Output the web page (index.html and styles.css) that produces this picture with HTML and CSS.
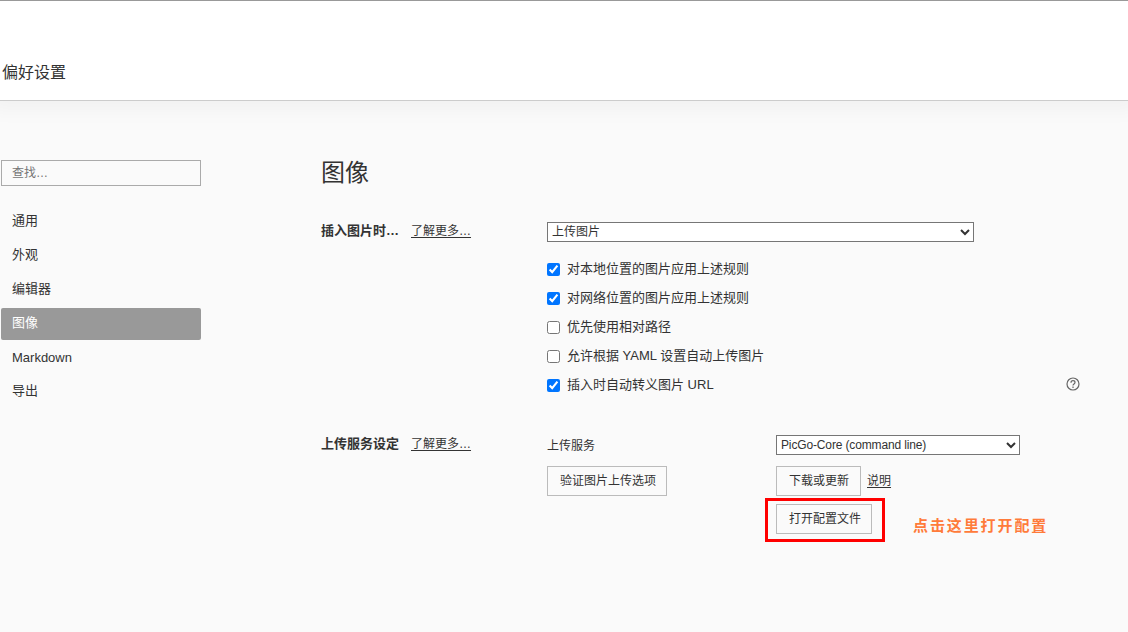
FILE: index.html
```html
<!DOCTYPE html>
<html lang="zh-CN">
<head>
<meta charset="utf-8">
<title>偏好设置</title>
<link rel="stylesheet" href="styles.css">
</head>
<body>
<header class="header"><h1 class="header-title">偏好设置</h1></header>
<div class="layout">
  <aside class="sidebar">
    <input class="search" type="text" placeholder="查找…">
    <nav class="nav">
      <a class="nav-item">通用</a>
      <a class="nav-item">外观</a>
      <a class="nav-item">编辑器</a>
      <a class="nav-item active">图像</a>
      <a class="nav-item latin">Markdown</a>
      <a class="nav-item">导出</a>
    </nav>
  </aside>
  <main class="content">
    <h2 class="title">图像</h2>
    <section class="group">
      <div class="group-head"><strong class="group-name">插入图片时…</strong><a class="link">了解更多…</a></div>
      <div class="group-body">
        <select class="select select-wide"><option>上传图片</option></select>
        <div class="checks">
          <label class="check"><input type="checkbox" checked><span>对本地位置的图片应用上述规则</span></label>
          <label class="check"><input type="checkbox" checked><span>对网络位置的图片应用上述规则</span></label>
          <label class="check"><input type="checkbox"><span>优先使用相对路径</span></label>
          <label class="check"><input type="checkbox"><span>允许根据 YAML 设置自动上传图片</span></label>
          <label class="check"><input type="checkbox" checked><span>插入时自动转义图片 URL</span>
            <svg class="help" viewBox="0 0 14 14" width="14" height="14" fill="none" stroke="#666" stroke-width="1.2"><circle cx="7" cy="7" r="6"/><path d="M5 5.7C5 4.4 5.8 3.7 7 3.7s2 .7 2 1.8c0 1.5-2 1.6-2 3.1"/><path d="M7 9.6v1.3"/></svg>
          </label>
        </div>
      </div>
    </section>
    <section class="group group-upload">
      <div class="group-head"><strong class="group-name">上传服务设定</strong><a class="link">了解更多…</a></div>
      <div class="group-body upload">
        <span class="field-label">上传服务</span>
        <select class="select select-latin"><option>PicGo-Core (command line)</option></select>
        <button class="button">验证图片上传选项</button>
        <div class="actions"><button class="button button-update">下载或更新</button><a class="link">说明</a></div>
        <div class="config">
          <button class="button">打开配置文件</button>
          <span class="marker"></span>
          <span class="note">点击这里打开配置</span>
        </div>
      </div>
    </section>
  </main>
</div>
</body>
</html>
```
FILE: styles.css
```css
* { box-sizing: border-box; }

body {
  margin: 0;
  height: 632px;
  overflow: hidden;
  background: #fafafa;
  color: #333;
  font: 13px/20px "Liberation Sans", "Noto Sans CJK SC", sans-serif;
}

.header {
  height: 101px;
  padding: 60px 0 0 2px;
  border-top: 1px solid #999;
  border-bottom: 1px solid #ccc;
  background: #fff;
  box-shadow: 0 0 18px 10px rgba(0, 0, 0, 0.035);
}

.header-title { margin: 0; font-size: 16px; font-weight: 400; line-height: 24px; }

.layout { display: flex; gap: 120px; padding: 59px 0 0 1px; }

.sidebar { width: 200px; }

.search {
  display: block;
  width: 200px;
  height: 26px;
  padding: 0 10px;
  border: 1px solid #aaa;
  background: transparent;
  font: 12px "Liberation Sans", "Noto Sans CJK SC", sans-serif;
}

.search::placeholder { color: #757575; }

.nav { display: flex; flex-direction: column; gap: 2px; margin-top: 20px; }

.nav-item { height: 32px; padding: 0 11px; border-radius: 2px; line-height: 29px; }

.nav-item.latin { line-height: 31px; }

.nav-item.active { background: #999; color: #fff; }

.content { width: 760px; }

.title { margin: -5px 0 0; font-size: 24px; font-weight: 400; line-height: 36px; }

.group { display: grid; grid-template-columns: 226px 1fr; margin-top: 31px; }

.group-upload { margin-top: 40px; }

.group-head { display: flex; gap: 12px; height: 20px; line-height: 18px; }

.group-name { width: 78px; white-space: nowrap; }

.link { font-size: 12px; text-decoration: underline; text-underline-offset: 2px; }

.select {
  width: 244px;
  height: 20px;
  padding: 0;
  border: 1px solid #767676;
  border-radius: 0;
  background: #fff;
  color: #333;
  font: 12px "Liberation Sans", "Noto Sans CJK SC", sans-serif;
}

.select-wide { display: block; width: 427px; }

.select-latin { letter-spacing: -0.14px; }

.checks { display: flex; flex-direction: column; gap: 9px; margin-top: 17px; }

.check { display: flex; align-items: center; gap: 7px; height: 20px; }

.check input { width: 13px; height: 13px; margin: 1px 0 0; accent-color: #0075ff; }

.help { margin: 0 1px 2px auto; }

.upload {
  display: grid;
  grid-template-columns: 229px 1fr;
  grid-template-rows: 20px 41px auto;
  align-items: start;
}

.field-label { font-size: 12px; line-height: 22px; }

.button {
  justify-self: start;
  height: 30px;
  padding: 0 10px 3px 12px;
  border: 1px solid #bbb;
  background: transparent;
  color: #333;
  font: 12px "Liberation Sans", "Noto Sans CJK SC", sans-serif;
}

.button-update { padding-right: 11px; }

.upload > .button, .actions { margin-top: 11px; }

.actions { display: flex; gap: 6px; line-height: 30px; }

.config { position: relative; display: flex; grid-column: 2; gap: 41px; margin-top: 8px; }

.marker {
  position: absolute;
  top: -6px;
  left: -11px;
  width: 120px;
  height: 44px;
  border: 3px solid #f00;
}

.note { color: #ff7b3a; font-size: 15px; font-weight: 700; letter-spacing: 1.9px; line-height: 44px; white-space: nowrap; }
```
